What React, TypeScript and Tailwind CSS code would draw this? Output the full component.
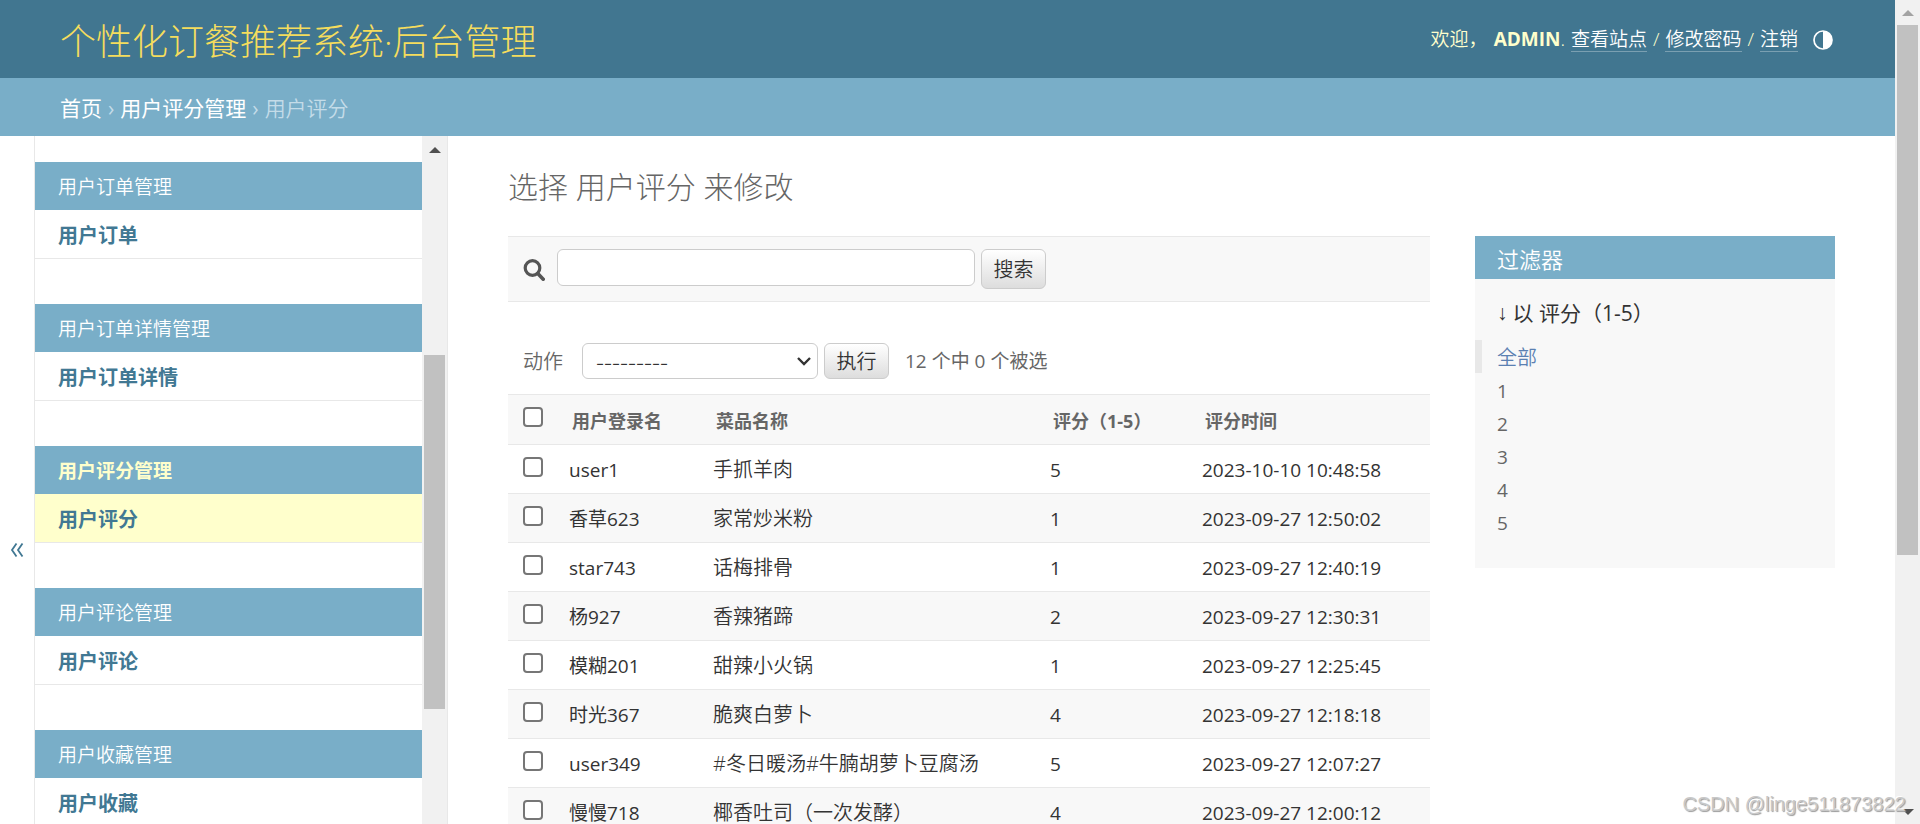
import React from "react";

type Group = { title: string; item: string; current?: boolean };

const groups: Group[] = [
  { title: "用户订单管理", item: "用户订单" },
  { title: "用户订单详情管理", item: "用户订单详情" },
  { title: "用户评分管理", item: "用户评分", current: true },
  { title: "用户评论管理", item: "用户评论" },
  { title: "用户收藏管理", item: "用户收藏" },
];

const ratings = [
  { user: "user1", dish: "手抓羊肉", score: 5, time: "2023-10-10 10:48:58" },
  { user: "香草623", dish: "家常炒米粉", score: 1, time: "2023-09-27 12:50:02" },
  { user: "star743", dish: "话梅排骨", score: 1, time: "2023-09-27 12:40:19" },
  { user: "杨927", dish: "香辣猪蹄", score: 2, time: "2023-09-27 12:30:31" },
  { user: "模糊201", dish: "甜辣小火锅", score: 1, time: "2023-09-27 12:25:45" },
  { user: "时光367", dish: "脆爽白萝卜", score: 4, time: "2023-09-27 12:18:18" },
  { user: "user349", dish: "#冬日暖汤#牛腩胡萝卜豆腐汤", score: 5, time: "2023-09-27 12:07:27" },
  { user: "慢慢718", dish: "椰香吐司（一次发酵）", score: 4, time: "2023-09-27 12:00:12" },
];

const scores = ["1", "2", "3", "4", "5"];

function Arrow({ down = false, className }: { down?: boolean; className: string }) {
  return (
    <svg width="12" height="6" viewBox="0 0 12 6" className={className} aria-hidden="true">
      <path d={down ? "M0 0h12L6 6z" : "M0 6h12L6 0z"} fill="currentColor" />
    </svg>
  );
}

function Header() {
  const link = "border-b border-white/30 text-white";
  return (
    <header className="flex h-[78px] shrink-0 items-center justify-between bg-[#417690] pr-[62px] pl-[60px] text-[#ffffcc]">
      <a href="#" className="pt-[6px] text-[36px] leading-[48px] font-light text-[#f5dd5d]">
        个性化订餐推荐系统·后台管理
      </a>
      <div className="flex items-center gap-[15px] text-[19px] leading-[24px] font-[350]">
        <div className="flex items-center gap-[6px]">
          <span>欢迎，</span>
          <span>
            <strong className="font-bold">ADMIN</strong>.
          </span>
          <a href="#" className={link}>查看站点</a>
          <span>/</span>
          <a href="#" className={link}>修改密码</a>
          <span>/</span>
          <a href="#" className={link}>注销</a>
        </div>
        <button type="button" aria-label="切换主题" className="pt-[2px] text-white">
          <svg width="20" height="20" viewBox="0 0 20 20" aria-hidden="true">
            <circle cx="10" cy="10" r="9" fill="none" stroke="currentColor" strokeWidth="1.7" />
            <path d="M10 1a9 9 0 0 1 0 18z" fill="currentColor" />
          </svg>
        </button>
      </div>
    </header>
  );
}

function Sidebar() {
  return (
    <nav className="flex w-[414px] shrink-0 border-x border-[#e8e8e8]">
      <div className="flex min-w-0 flex-1 flex-col gap-[45px] overflow-hidden pt-[26px]">
        {groups.map((g) => (
          <section key={g.title} className="shrink-0">
            <h2
              className={
                g.current
                  ? "h-[48px] bg-[#79aec8] px-[23px] text-[19px] leading-[50px] font-bold text-[#ffffcc]"
                  : "h-[48px] bg-[#79aec8] px-[23px] text-[19px] leading-[50px] font-[350] text-white"
              }
            >
              <a href="#">{g.title}</a>
            </h2>
            <div
              className={
                g.current
                  ? "h-[49px] border-b border-[#e8e8e8] bg-[#ffffcc] px-[23px] text-[20px] leading-[52px] font-bold text-[#417893]"
                  : "h-[49px] border-b border-[#e8e8e8] px-[23px] text-[20px] leading-[52px] font-bold text-[#417893]"
              }
            >
              <a href="#">{g.item}</a>
            </div>
          </section>
        ))}
      </div>
      <div className="flex w-[25px] shrink-0 flex-col items-center bg-[#f1f1f1]" aria-hidden="true">
        <div className="flex h-[26px] items-center pt-[2px]">
          <Arrow className="text-[#505050]" />
        </div>
        <div className="flex-[193]" />
        <div className="w-[21px] flex-[354] bg-[#c1c1c1]" />
        <div className="flex-[115]" />
      </div>
    </nav>
  );
}

const buttonClass =
  "w-[65px] shrink-0 rounded-[6px] border border-[#cccccc] bg-linear-to-b from-white to-[#dddddd] pt-[2px] text-center text-[20px] font-[350] text-[#333333]";

function SearchBar() {
  return (
    <form className="flex h-[66px] items-start border-y border-[#e8e8e8] bg-[#f8f8f8] px-[15px] pt-[12px]">
      <label htmlFor="searchbar" aria-label="搜索" className="mt-[10px] mr-[12px] shrink-0 text-[#555555]">
        <svg width="22" height="22" viewBox="0 0 22 22" fill="none" stroke="currentColor" aria-hidden="true">
          <circle cx="9.5" cy="9" r="7.3" strokeWidth="3.2" />
          <path d="M14.8 14.6l5.4 5.6" strokeWidth="3.6" strokeLinecap="round" />
        </svg>
      </label>
      <input
        id="searchbar"
        type="text"
        className="mr-[6px] h-[37px] w-[418px] rounded-[6px] border border-[#cccccc] bg-white px-[8px] text-[19px]"
      />
      <button type="submit" className={`${buttonClass} h-[40px]`}>搜索</button>
    </form>
  );
}

function Actions() {
  return (
    <div className="flex h-[92px] items-end pb-[15px] pl-[15px] text-[20px] text-[#666666]">
      <label htmlFor="action" className="mr-[19px] h-[36px] leading-[38px] font-[350]">动作</label>
      <div className="relative mr-[6px]">
        <select
          id="action"
          className="block h-[36px] w-[236px] appearance-none rounded-[6px] border border-[#cccccc] bg-white px-[13px] font-['Noto_Sans_CJK_SC',sans-serif] text-[24px] leading-[32px] font-light text-[#333333]"
        >
          <option>---------</option>
        </select>
        <svg
          width="14"
          height="9"
          viewBox="0 0 14 9"
          className="pointer-events-none absolute top-[14px] right-[7px]"
          fill="none"
          stroke="#333333"
          strokeWidth="2.4"
          aria-hidden="true"
        >
          <path d="M1 1l6 6 6-6" />
        </svg>
      </div>
      <button type="button" className={`${buttonClass} mr-[16px] h-[36px]`}>执行</button>
      <span className="text-[19px] leading-[36px]">12 个中 0 个被选</span>
    </div>
  );
}

const checkClass =
  "block h-[20px] w-[20px] appearance-none rounded-[4px] border-2 border-[#767676] bg-white";

function RatingTable() {
  return (
    <table className="w-full table-fixed border-collapse text-left">
      <colgroup>
        <col className="w-[49px]" />
        <col className="w-[144px]" />
        <col className="w-[337px]" />
        <col className="w-[152px]" />
        <col />
      </colgroup>
      <thead>
        <tr className="h-[50px] border-y border-[#e8e8e8] bg-[#f8f8f8] text-[18px] leading-[24px] text-[#666666]">
          <th className="pt-[12px] pl-[15px] align-top">
            <input type="checkbox" aria-label="全选" className={checkClass} />
          </th>
          <th className="pt-[2px] pl-[15px] font-bold">用户登录名</th>
          <th className="pt-[2px] pl-[15px] font-bold">菜品名称</th>
          <th className="pt-[2px] pl-[15px] font-bold">评分（1-5）</th>
          <th className="pt-[2px] pl-[15px] font-bold">评分时间</th>
        </tr>
      </thead>
      <tbody>
        {ratings.map((r) => (
          <tr
            key={r.time}
            className="h-[49px] border-b border-[#e8e8e8] text-[19px] leading-[24px] text-[#333333] even:bg-[#f8f8f8]"
          >
            <td className="pt-[12px] pl-[15px] align-top">
              <input type="checkbox" aria-label={r.user} className={checkClass} />
            </td>
            <td className="pt-[2px] pl-[12px]">{r.user}</td>
            <td className="pt-[2px] pl-[12px] text-[20px] font-[350]">{r.dish}</td>
            <td className="pt-[2px] pl-[12px]">{r.score}</td>
            <td className="pt-[2px] pl-[12px]">{r.time}</td>
          </tr>
        ))}
      </tbody>
    </table>
  );
}

function Filter() {
  return (
    <aside className="w-[360px] shrink-0 self-start bg-[#f8f8f8] pb-[30px]">
      <h2 className="h-[43px] bg-[#79aec8] px-[22px] text-[22px] leading-[46px] font-[350] text-white">过滤器</h2>
      <h3 className="flex h-[61px] gap-[5px] px-[22px] pt-[18px] text-[21px] leading-[32px] text-[#333333]">
        <span className="font-['Liberation_Sans',sans-serif]">↓</span>
        <span>以 评分（1-5）</span>
      </h3>
      <ul className="text-[19px] leading-[36px] text-[#666666]">
        <li className="h-[33px] border-l-[7px] border-[#e8e8e8] pl-[15px] text-[20px] font-[350] text-[#5b80b2]">
          <a href="#">全部</a>
        </li>
        {scores.map((s) => (
          <li key={s} className="h-[33px] pl-[22px]">
            <a href="#">{s}</a>
          </li>
        ))}
      </ul>
    </aside>
  );
}

export default function App() {
  return (
    <div className="relative flex h-screen overflow-hidden bg-white font-['Open_Sans','Noto_Sans_CJK_SC',sans-serif]">
      <div className="flex min-w-0 flex-1 flex-col">
        <Header />
        <div className="flex h-[58px] shrink-0 items-center gap-[6px] bg-[#79aec8] px-[60px] pt-[2px] text-[21px] leading-[30px] text-[#c4dce8]">
          <a href="#" className="text-white">首页</a>
          <span>›</span>
          <a href="#" className="text-white">用户评分管理</a>
          <span>›</span>
          <span className="font-[350]">用户评分</span>
        </div>
        <div className="flex min-h-0 flex-1">
          <button
            type="button"
            aria-label="切换导航"
            className="flex w-[34px] shrink-0 items-center justify-center pt-[140px] text-[#417893]"
          >
            <svg width="14" height="14" viewBox="0 0 14 14" fill="none" stroke="currentColor" strokeWidth="1.8" aria-hidden="true">
              <path d="M6.5 0.5L2 7l4.500 6.500M12.500 0.500L8 7l4.500 6.500" />
            </svg>
          </button>
          <Sidebar />
          <main className="min-w-0 flex-1 overflow-hidden px-[60px] pt-[29px]">
            <h1 className="mb-[27px] text-[30px] leading-[44px] font-light text-[#666666]">选择 用户评分 来修改</h1>
            <div className="flex gap-[45px]">
              <div className="min-w-0 flex-1">
                <SearchBar />
                <Actions />
                <RatingTable />
              </div>
              <Filter />
            </div>
          </main>
        </div>
      </div>
      <div className="flex w-[25px] shrink-0 flex-col items-center bg-[#f1f1f1]" aria-hidden="true">
        <div className="flex h-[25px] items-center">
          <Arrow className="text-[#a3a3a3]" />
        </div>
        <div className="w-[21px] flex-[530] bg-[#c1c1c1]" />
        <div className="flex-[244]" />
        <div className="flex h-[25px] items-center">
          <Arrow down className="text-[#505050]" />
        </div>
      </div>
      <div className="absolute right-[14px] bottom-[7px] font-['Liberation_Sans',sans-serif] text-[20px] leading-[26px] text-[#c8c8c8] [text-shadow:-1px_-1px_0_#ffffff,1px_1px_1px_#999999]">
        CSDN @linge511873822
      </div>
    </div>
  );
}
